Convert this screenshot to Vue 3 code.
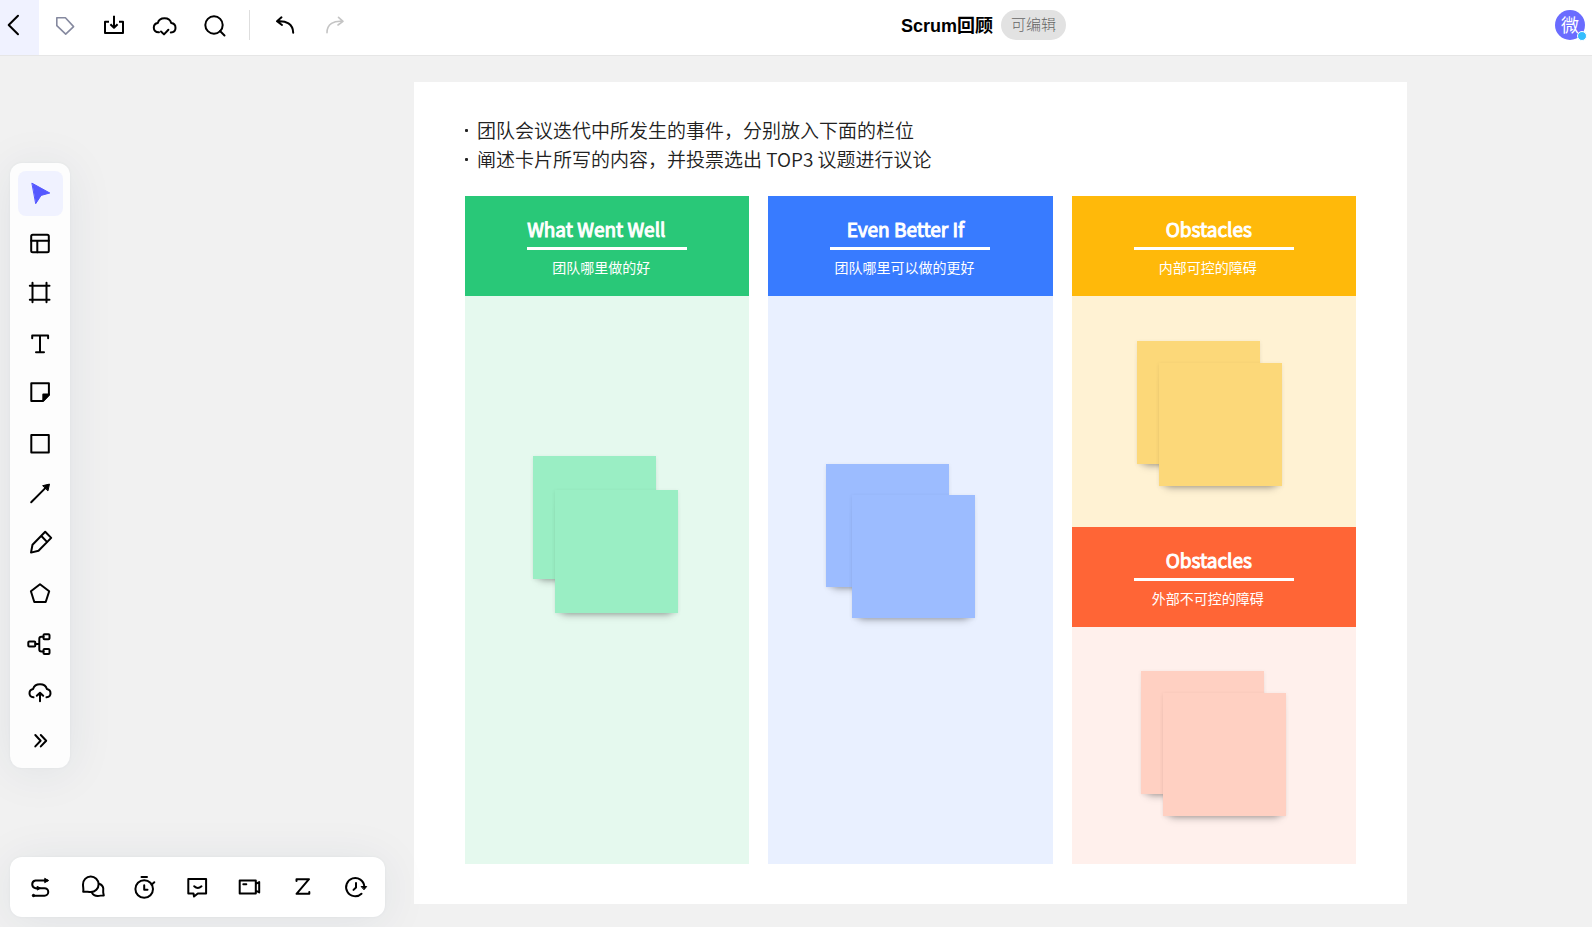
<script setup>
import { h } from 'vue'

const icons = {
  back: '<path d="M10 1.7L.7 11l9.300 9.300"/>',
  tag: '<path stroke-width="1.6" d="M3.8 3.8h8.6l8.2 8.8-7.9 7.5-8.9-8.4z"/>',
  download: '<path stroke-linecap="butt" d="M6 7.7H2V19h18V7.7h-4M11 1.7V14M7.4 10.2L11 13.8l3.6-3.6"/>',
  cloudCheck: '<path d="M6 18.3C2.500 18.500.8 16.300.8 13.800c0-2.600 1.800-4.400 4-4.700C5.600 6 8.300 4.300 11.500 4.300s6 1.900 6.700 4.800c2.500.3 4.300 2.200 4.300 4.800 0 2.500-1.800 4.300-4.700 4.500M8 17.500l3 2.900 4.400-4.600"/>',
  search: '<circle cx="11" cy="11" r="8.700"/><path d="M17 17l4.500 4.500"/>',
  undo: '<path d="M8.500 3.300L4 7.300l5 3.700M4.500 7.300C13 6.500 20 10 20.200 18.700"/>',
  redo: '<path stroke-width="1.600" d="M15.500 3.300L20 7.300 15 11M19.500 7.300C11 6.500 4 10 4 18.700"/>',
  select: '<path fill="currentColor" stroke-width="1" d="M4.200 1.300L21.800 11l-8.700 2.400-5.200 8z"/>',
  layout: '<rect x="3.200" y="3.700" width="17.600" height="17.600" rx="1.500"/><path d="M3.200 9.700h17.600M9.300 9.700v11.600"/>',
  frame: '<path d="M4.500 1.800v19.500M18.500 1.800v19.500M1.800 4.800h19.700M1.800 18.700h19.700"/>',
  text: '<path d="M4.200 7.300V4.600h15.900v2.700M12 4.600v16.700M8 21.300h8"/>',
  sticky: '<path d="M3.300 3.200h17.600v11.500l-6 6.200H3.300z"/><path fill="currentColor" d="M15.300 14.500h5.600l-5.600 6.200z"/>',
  square: '<rect x="3.300" y="5" width="17.500" height="17.500"/>',
  arrow: '<path d="M3.200 22.200L19 6.400"/><path fill="currentColor" stroke-width="1" d="M15 5.600l6.500-1.500-1.500 6.500z"/>',
  pen: '<path d="M3 22.600l1.500-7.900L17.200 1.800 23.200 7.900 10.500 20.700zM13.600 6.300l5.600 5.800"/>',
  pentagon: '<path d="M12 5.200l9.200 7.100-3.500 10.700H6.300L2.900 12.300z"/>',
  tree: '<rect x=".300" y="12.500" width="7" height="5" rx="1"/><rect x="15.500" y="5.300" width="6" height="5" rx="1"/><rect x="15.500" y="20.100" width="6" height="5" rx="1"/><path d="M7.300 15h4M15.500 7.700h-2.200q-2 0-2 2v10.800q0 2 2 2h2.200"/>',
  upload: '<path d="M5.500 18.300C3 18 1.500 16.300 1.500 14.200c0-2.200 1.500-3.900 3.600-4.300C5.900 7.100 8.500 5.200 12 5.200s6.100 1.900 6.900 4.700c2.100.4 3.600 2.100 3.600 4.300 0 2.100-1.500 3.800-4 4.100M12 22.300V13.800M8.800 16.800l3.200-3 3.200 3"/>',
  more: '<path d="M7.300 7l5.300 5.700-5.300 5.700M12.800 7l5.400 5.700-5.400 5.700"/>',
  flow: '<path d="M19.500 5.500H7.500a3.900 3.900 0 000 7.700h9a3.700 3.700 0 010 7.500H5.500"/><path fill="currentColor" stroke-width="1" d="M17 3.500l3.500 2-3.500 2zM9.500 11.500l3 1.700-3 1.700z"/><circle cx="5.500" cy="20.500" r="1.200" fill="currentColor" stroke-width="1"/>',
  chat: '<path d="M2.200 16.800C2.800 14.500 2 12.500 2 9.500a7.800 7.800 0 117.800 7.600c-3 0-5-.8-7.600-.3z"/><path d="M18.200 8.800c3.200 1.200 4.600 4 4 7.200-.2 1.500.3 3 .6 4.500-2.300-.4-3.300.4-6 .4-2.700 0-4.800-1-5.900-3.300"/>',
  timer: '<circle cx="11.200" cy="14" r="8.800"/><path d="M8.500 2h5.500M11.200 10.200v4.600h3.300M18.500 9.700l2.800-2.500"/>',
  comment: '<path d="M3.300 4h17.800v14.400h-8.300L9 21.500l-.500-3.100H3.300zM9.200 11.300q3.600 3.300 7.300 0"/>',
  video: '<path d="M1.700 5.500h16.100v12.900H1.700zM17.800 9l3.400-2v10.500l-3.400-2M5.300 9.300h3"/>',
  zed: '<path d="M6.500 6V4.200H19L6.500 18.800h12.800V17"/>',
  history: '<path d="M21.300 11.500A9.100 9.100 0 1018.500 18.700M13 8v4.500l-2.500 2.400"/><path fill="currentColor" stroke-width="1" d="M18.500 11.500h5.200L21.200 14.500z"/>',
}

const Icon = (props) =>
  h('svg', {
    width: 24, height: 24, viewBox: '0 0 24 24', fill: 'none', stroke: 'currentColor',
    'stroke-width': 2, 'stroke-linecap': 'round', 'stroke-linejoin': 'round',
    overflow: 'visible', 'aria-hidden': 'true', innerHTML: icons[props.name],
  })
Icon.props = ['name']

const fileTools = [
  { name: 'tag', label: '标签' },
  { name: 'download', label: '导出' },
  { name: 'cloudCheck', label: '已保存' },
  { name: 'search', label: '搜索' },
]
const drawTools = [
  ['select', '选择'], ['layout', '模板'], ['frame', '画框'], ['text', '文本'], ['sticky', '便签'],
  ['square', '图形'], ['arrow', '连线'], ['pen', '画笔'], ['pentagon', '多边形'], ['tree', '思维导图'],
  ['upload', '上传'], ['more', '更多'],
]
const meetingTools = [
  ['flow', '流程'], ['chat', '聊天'], ['timer', '计时器'], ['comment', '评论'], ['video', '视频会议'],
  ['zed', '快捷工具'], ['history', '历史版本'],
]
const columns = [
  [{ tone: 'green', title: 'What Went Well', sub: '团队哪里做的好', lead: true }],
  [{ tone: 'blue', title: 'Even Better If', sub: '团队哪里可以做的更好' }],
  [
    { tone: 'amber', title: 'Obstacles', sub: '内部可控的障碍' },
    { tone: 'coral', title: 'Obstacles', sub: '外部不可控的障碍' },
  ],
]
</script>

<template>
  <div class="app">
    <header class="topbar">
      <button class="back" aria-label="返回"><Icon name="back" /></button>
      <button v-for="t in fileTools" :key="t.name" class="tool" :class="t.name" :aria-label="t.label">
        <Icon :name="t.name" />
      </button>
      <span class="divider"></span>
      <button class="tool" aria-label="撤销"><Icon name="undo" /></button>
      <button class="tool redo" aria-label="重做" disabled><Icon name="redo" /></button>
      <div class="doc">
        <h1>Scrum回顾</h1>
        <span class="badge">可编辑</span>
      </div>
      <button class="avatar">微<span class="status"></span></button>
    </header>

    <main class="canvas">
      <section class="board">
        <ul class="intro">
          <li>团队会议迭代中所发生的事件，分别放入下面的栏位</li>
          <li>阐述卡片所写的内容，并投票选出 TOP3 议题进行议论</li>
        </ul>
        <div class="columns">
          <div v-for="(col, i) in columns" :key="i" class="column">
            <section v-for="c in col" :key="c.tone" class="lane" :class="c.tone">
              <header class="lane-head">
                <div class="heading">
                  <h2 :class="{ lead: c.lead }">{{ c.title }}</h2>
                  <p>{{ c.sub }}</p>
                </div>
              </header>
              <div class="lane-body">
                <div class="note rear"></div>
                <div class="note front"></div>
              </div>
            </section>
          </div>
        </div>
      </section>
    </main>

    <nav class="sidebar" aria-label="绘图工具">
      <button v-for="[name, label] in drawTools" :key="name" :class="{ active: name === 'select' }" :aria-label="label">
        <Icon :name="name" />
      </button>
    </nav>
    <nav class="dock" aria-label="协作工具">
      <button v-for="[name, label] in meetingTools" :key="name" :aria-label="label"><Icon :name="name" /></button>
    </nav>
  </div>
</template>

<style>
body {
  margin: 0;
}
</style>

<style scoped>
.app {
  position: relative;
  display: flex;
  flex-direction: column;
  min-height: 100vh;
  background: #f1f1f1;
  color: #000;
  font-family: "Noto Sans CJK SC", sans-serif;
}
button {
  display: flex;
  align-items: center;
  justify-content: center;
  padding: 0;
  border: 0;
  background: none;
  color: inherit;
  font: inherit;
}
h1, h2, p, ul {
  margin: 0;
  padding: 0;
}
.topbar {
  display: flex;
  height: 55px;
  background: #fff;
  border-bottom: 1px solid #e6e6e6;
}
.topbar .back,
.topbar .tool {
  box-sizing: border-box;
  height: 100%;
  padding-bottom: 3px;
}
.topbar .back {
  width: 39px;
  margin-right: 1px;
  background: #f0f2ff;
}
.tool {
  width: 50px;
}
.tag {
  color: #85899f;
}
.topbar .redo {
  color: #c4c4c4;
}
.divider {
  width: 1px;
  height: 30px;
  margin: 10px 10px 0 9px;
  background: #dedede;
}
.doc {
  display: flex;
  align-items: center;
  gap: 8px;
  height: 50px;
  margin-left: 541px;
  white-space: nowrap;
}
.doc h1 {
  padding-top: 2px;
  font: bold 18px/26px "Liberation Sans", "Noto Sans CJK SC", sans-serif;
}
.badge {
  padding: 0 10px 2px;
  border-radius: 15px;
  background: #e2e2e2;
  color: #666;
  font-size: 15px;
  font-weight: 300;
  line-height: 28px;
}
.topbar .avatar {
  position: relative;
  width: 30px;
  height: 30px;
  margin: 10px 7px 0 auto;
  padding-bottom: 2px;
  border-radius: 50%;
  background: #6a6cff;
  color: #fff;
  font-size: 18px;
}
.status {
  position: absolute;
  right: -2px;
  bottom: -1px;
  width: 8px;
  height: 8px;
  border: 1px solid #fff;
  border-radius: 50%;
  background: #35bdfd;
}
.canvas {
  display: flex;
  flex: 1;
  padding: 26px 185px 23px 414px;
}
.board {
  box-sizing: border-box;
  display: flex;
  flex: 1;
  flex-direction: column;
  padding: 33px 51px 40px;
  background: #fff;
}
.intro {
  margin-bottom: 23px;
  list-style: none;
  color: #222;
  font-size: 19px;
  font-weight: 350;
  line-height: 29px;
  white-space: nowrap;
}
.intro li {
  display: flex;
  align-items: center;
  gap: 9px;
}
.intro li::before {
  content: "";
  box-sizing: border-box;
  width: 3px;
  height: 3px;
  margin-top: 2px;
  border-radius: 1px;
  background: #222;
}
.columns {
  display: grid;
  flex: 1;
  grid-template-columns: repeat(3, 1fr);
  gap: 19px;
}
.column,
.lane {
  display: flex;
  flex: 1;
  flex-direction: column;
}
.amber {
  flex: 0 0 331px;
}
.lane-head {
  display: flex;
  justify-content: center;
  height: 100px;
  color: #fff;
  text-align: center;
}
.heading {
  width: 160px;
  padding-top: 16px;
  white-space: nowrap;
}
.heading h2 {
  padding: 0 10px 2px 0;
  border-bottom: 3px solid #fff;
  font-size: 19px;
  font-weight: 400;
  line-height: 33px;
  -webkit-text-stroke: 1px #fff;
}
.heading .lead {
  text-align: left;
}
.heading p {
  padding: 7px 12px 0 0;
  font-size: 14px;
  line-height: 20px;
}
.lane-body {
  position: relative;
  flex: 1;
}
.green .lane-head { background: #29c878; }
.blue .lane-head { background: #387bff; }
.amber .lane-head { background: #ffb90a; }
.coral .lane-head { background: #ff6536; }
.green .lane-body { background: #e5f9ee; }
.blue .lane-body { background: #e9f0ff; }
.amber .lane-body { background: #fff2d3; }
.coral .lane-body { background: #fff0ec; }
.note {
  position: absolute;
  width: 123px;
  height: 123px;
  box-shadow: 0 1px 4px rgba(0, 0, 0, 0.08), 0 8px 8px -7px rgba(0, 0, 0, 0.36);
}
.green .note { background: #9aeec4; }
.blue .note { background: #9cbcff; }
.amber .note { background: #fcd879; }
.coral .note { background: #ffd0c2; }
.green .rear { left: 68px; top: 160px; }
.green .front { left: 90px; top: 194px; }
.blue .rear { left: 58px; top: 168px; }
.blue .front { left: 84px; top: 199px; }
.amber .rear { left: 65px; top: 45px; }
.amber .front { left: 87px; top: 67px; }
.coral .rear { left: 69px; top: 44px; }
.coral .front { left: 91px; top: 66px; }
.sidebar,
.dock {
  position: absolute;
  left: 10px;
  box-sizing: border-box;
  display: flex;
  border-radius: 12px;
  background: #fdfdfd;
  box-shadow: 0 0 3px rgba(30, 50, 90, 0.05), 0 4px 48px rgba(30, 50, 90, 0.08);
}
.sidebar {
  top: 163px;
  flex-direction: column;
  align-items: center;
  justify-content: space-between;
  width: 60px;
  height: 605px;
  padding: 8px 0 5px;
}
.sidebar button {
  width: 45px;
  height: 45px;
  border-radius: 8px;
}
.sidebar .active {
  background: #f0f2ff;
  color: #5558ff;
}
.dock {
  bottom: 10px;
  width: 375px;
  height: 60px;
  padding: 0 4px;
  background: #fff;
}
.dock button {
  flex: 1;
}
</style>
